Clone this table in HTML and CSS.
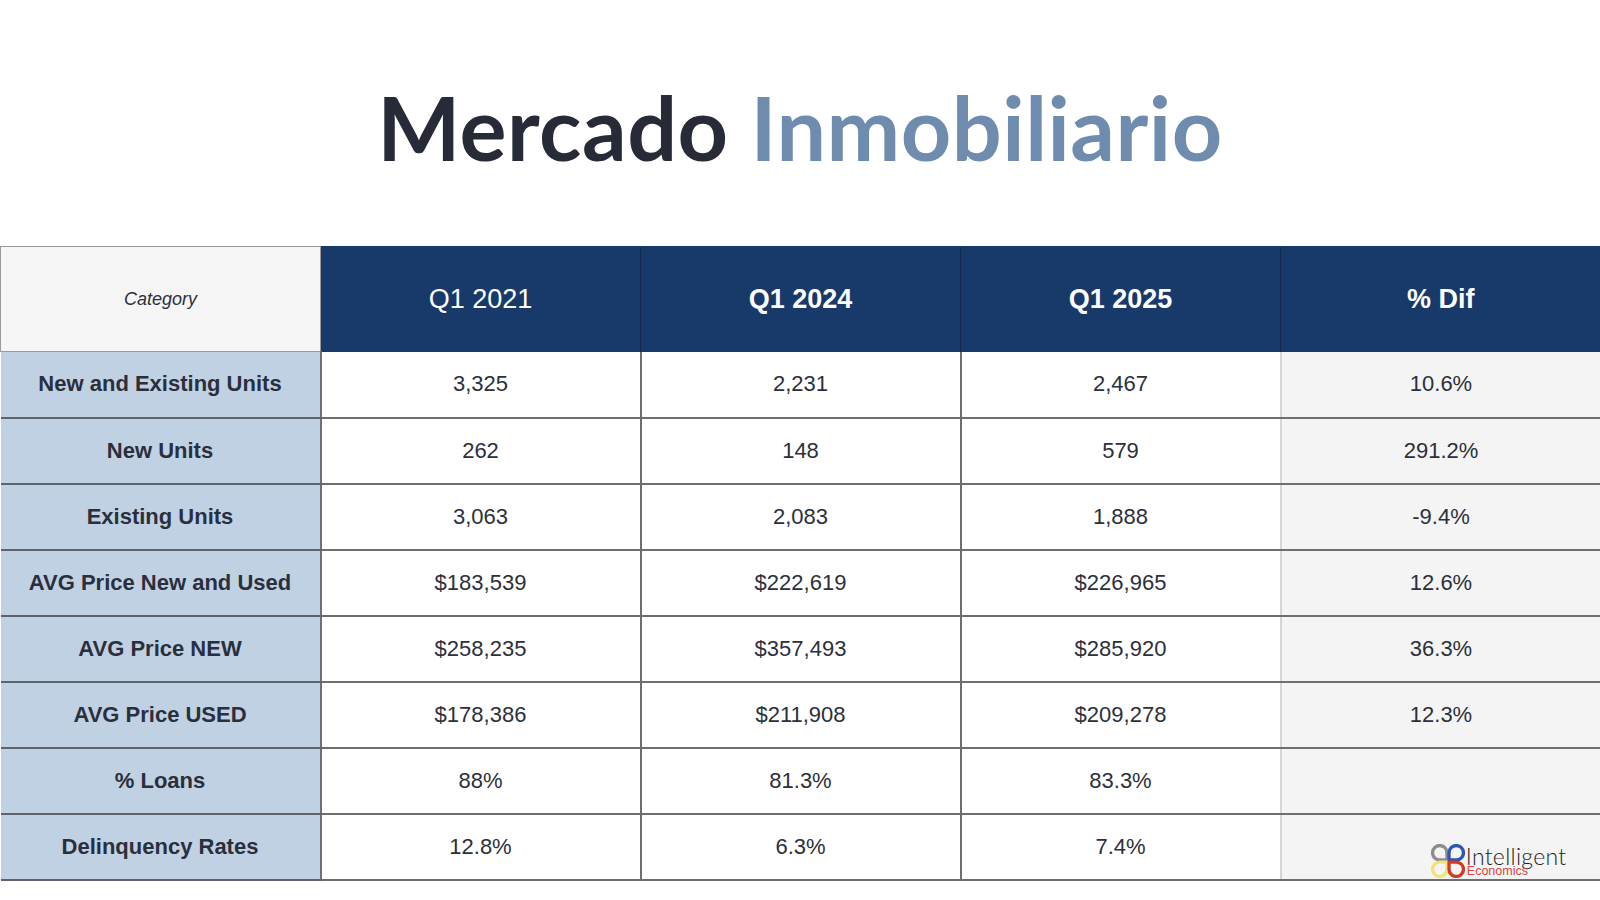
FILE: index.html
```html
<!DOCTYPE html>
<html lang="es">
<head>
<meta charset="utf-8">
<title>Mercado Inmobiliario</title>
<link rel="stylesheet" href="styles.css">
</head>
<body>
<div class="slide">
  <header class="title-area">
    <h1 class="title"><span class="dark">Mercado</span> <span class="light">Inmobiliario</span></h1>
  </header>
  <table class="data">
    <colgroup>
      <col class="c"><col class="c"><col class="c"><col class="c"><col class="c">
    </colgroup>
    <thead>
      <tr class="head-row">
        <th class="cat">Category</th>
        <th class="q reg">Q1 2021</th>
        <th class="q">Q1 2024</th>
        <th class="q">Q1 2025</th>
        <th class="q">% Dif</th>
      </tr>
    </thead>
    <tbody>
      <tr><th class="label">New and Existing Units</th><td>3,325</td><td>2,231</td><td class="pre">2,467</td><td class="dif">10.6%</td></tr>
      <tr><th class="label">New Units</th><td>262</td><td>148</td><td class="pre">579</td><td class="dif">291.2%</td></tr>
      <tr><th class="label">Existing Units</th><td>3,063</td><td>2,083</td><td class="pre">1,888</td><td class="dif">-9.4%</td></tr>
      <tr><th class="label">AVG Price New and Used</th><td>$183,539</td><td>$222,619</td><td class="pre">$226,965</td><td class="dif">12.6%</td></tr>
      <tr><th class="label">AVG Price NEW</th><td>$258,235</td><td>$357,493</td><td class="pre">$285,920</td><td class="dif">36.3%</td></tr>
      <tr><th class="label">AVG Price USED</th><td>$178,386</td><td>$211,908</td><td class="pre">$209,278</td><td class="dif">12.3%</td></tr>
      <tr><th class="label">% Loans</th><td>88%</td><td>81.3%</td><td class="pre">83.3%</td><td class="dif"></td></tr>
      <tr><th class="label">Delinquency Rates</th><td>12.8%</td><td>6.3%</td><td class="pre">7.4%</td>
        <td class="dif logo-cell">
          <div class="logo">
            <svg class="logo-mark" width="34" height="34" viewBox="0 0 33 33" aria-hidden="true">
              <path d="M15.5 15.5 L15.5 8.5 A7 7 0 1 0 8.5 15.5 Z" fill="none" stroke="#8c8c8c" stroke-width="3.2" stroke-linejoin="round"/>
              <path d="M17.5 15.5 L17.5 8.5 A7 7 0 1 1 24.5 15.5 Z" fill="none" stroke="#2f55b5" stroke-width="3.2" stroke-linejoin="round"/>
              <path d="M15.5 17.5 L15.5 24.5 A7 7 0 1 1 8.5 17.5 Z" fill="none" stroke="#f2e27a" stroke-width="3.2" stroke-linejoin="round"/>
              <path d="M17.5 17.5 L17.5 24.5 A7 7 0 1 0 24.5 17.5 Z" fill="none" stroke="#d33a26" stroke-width="3.2" stroke-linejoin="round"/>
            </svg>
            <div class="logo-text">
              <span class="logo-main">Intelligent</span>
              <span class="logo-sub">Economics</span>
            </div>
          </div>
        </td>
      </tr>
    </tbody>
  </table>
</div>
</body>
</html>
```

FILE: styles.css
```css
html, body {
  margin: 0;
  padding: 0;
  background: #ffffff;
}

.slide {
  width: 1600px;
  height: 900px;
  display: flex;
  flex-direction: column;
  background: #ffffff;
}

.title-area {
  height: 246px;
  display: flex;
  justify-content: center;
  box-sizing: border-box;
  padding-top: 75px;
}

.title {
  margin: 0;
  font-family: "Lato", "Open Sans", sans-serif;
  font-weight: 700;
  font-size: 88px;
  line-height: 104px;
  letter-spacing: 0.5px;
}

.title .dark { color: #272b38; }
.title .light { color: #6f8cae; }

.data {
  width: 1600px;
  border-collapse: collapse;
  table-layout: fixed;
  font-family: "Liberation Sans", Arial, sans-serif;
  color: #2c303b;
}

.data col.c { width: 320px; }

.head-row { height: 105px; }

.data th, .data td {
  padding: 0;
  text-align: center;
  vertical-align: middle;
}

.cat {
  background: #f5f5f5;
  font-style: italic;
  font-weight: 400;
  font-size: 18px;
  color: #2c303b;
  border: 1px solid #9a9a9a;
}

.q {
  background: #183a6a;
  color: #ffffff;
  font-weight: 700;
  font-size: 27px;
  border-left: 1px solid #12294a;
  border-top: 1px solid #183a6a;
}

.q.reg { font-weight: 400; }

.data tbody tr { height: 66px; }

.data tbody th.label {
  background: #c1d1e4;
  font-weight: 700;
  font-size: 22px;
  color: #2a2f3c;
  border-right: 2px solid #6e7079;
  border-bottom: 2px solid #5f636d;
}

.data tbody td {
  background: #ffffff;
  font-size: 22px;
  color: #2c303b;
  border-right: 2px solid #6e6e6e;
  border-bottom: 2px solid #6e6e6e;
}

.data tbody td.pre {
  border-right: 2px solid #d6d6d6;
}

.data tbody td.dif {
  background: #f4f4f4;
  border-right: none;
}

.logo-cell {
  position: relative;
}

.logo {
  position: absolute;
  right: 34px;
  bottom: 1px;
  display: flex;
  align-items: flex-end;
  gap: 1px;
}

.logo-mark { display: block; }

.logo-text {
  display: flex;
  flex-direction: column;
  align-items: flex-start;
  text-align: left;
  padding-bottom: 1px;
}

.logo-main {
  font-family: "Lato", sans-serif;
  font-weight: 300;
  font-size: 23px;
  line-height: 20px;
  color: #1f1f1f;
  letter-spacing: 0.3px;
}

.logo-sub {
  font-family: "Liberation Sans", Arial, sans-serif;
  font-size: 12.5px;
  line-height: 11px;
  color: #d9473a;
  margin-left: 1px;
}
```
